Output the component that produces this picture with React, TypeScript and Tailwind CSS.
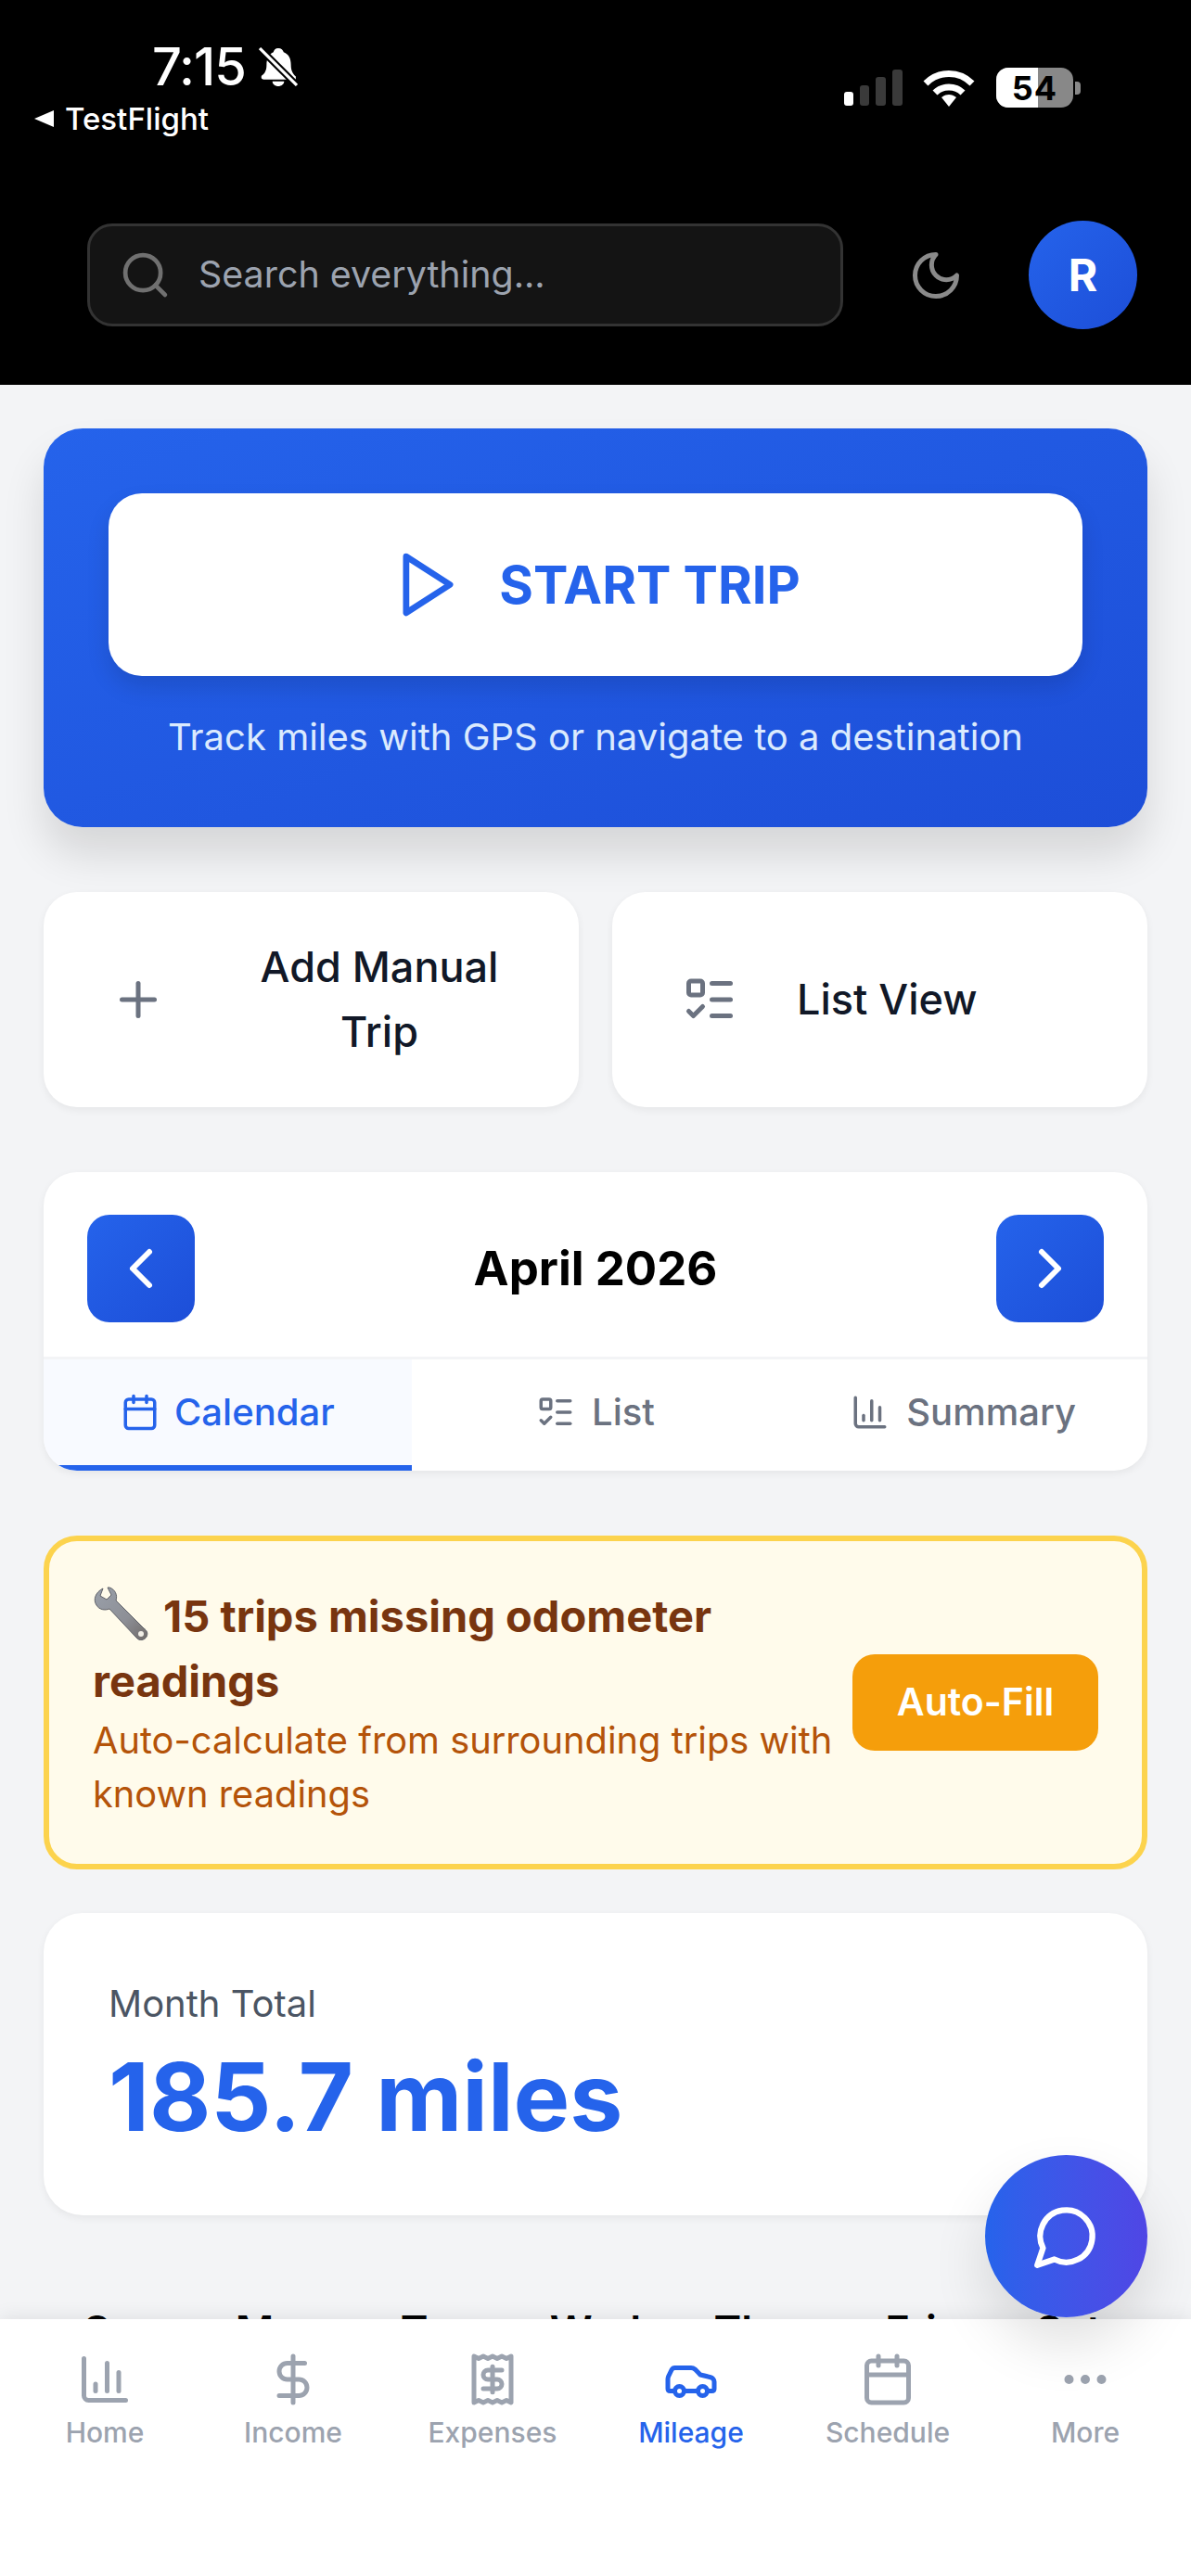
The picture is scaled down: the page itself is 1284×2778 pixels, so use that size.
import React from "react";
import { Search, Plus, ListTodo, ChevronLeft, ChevronRight, Calendar, ChartColumn, DollarSign, Receipt, Car, Ellipsis } from "lucide-react";

function Wrench() {
  return (
    <svg viewBox="0 0 60 60" className="inline-block w-[60px] h-[60px] mr-[16px] align-[-11px]">
      <defs>
        <linearGradient id="wr" x1="0" y1="0" x2="1" y2="1">
          <stop offset="0" stopColor="#9aa0aa" />
          <stop offset="0.6" stopColor="#8d8f96" />
          <stop offset="1" stopColor="#6f6a68" />
        </linearGradient>
      </defs>
      <path d="M11 2 C3 6 0 14 4 20 C7 25 13 26 18 24 L47 55 C50 59 56 58 58 54 C60 50 58 47 55 45 L25 15 C27 9 24 3 18 1 L16 1 L20 9 L15 14 L8 10 Z" fill="url(#wr)" stroke="#5f6168" strokeWidth="1" />
      <circle cx="52" cy="51" r="3" fill="#f1eee6" />
    </svg>
  );
}

const navItems = [
  { label: "Home", Icon: ChartColumn, w: "w-[202px]" },
  { label: "Income", Icon: DollarSign, w: "w-[204px]" },
  { label: "Expenses", Icon: Receipt, w: "w-[226px]" },
  { label: "Mileage", Icon: Car, w: "w-[202px]", active: true },
  { label: "Schedule", Icon: Calendar, w: "w-[222px]" },
  { label: "More", Icon: Ellipsis, w: "w-[204px]" },
];

export default function App() {
  return (
    <div className="relative w-[1284px] h-[2778px] overflow-hidden flex flex-col bg-[#f3f4f6] text-[#111827] font-['Inter','Liberation_Sans',sans-serif]">
      <header className="bg-black h-[415px] shrink-0 flex flex-col">
        <div className="flex justify-between items-start h-[238px] pt-[46px]">
          <div className="pl-[37px] flex flex-col">
            <div className="flex items-center pl-[127px] h-[52px] text-white">
              <span className="text-[56px] leading-[52px] font-medium tracking-[-1px]">7:15</span>
              <svg viewBox="0 0 40 40" className="w-[42px] h-[42px] ml-[14px]" fill="white">
                <path d="M20 1 C23 1 25 3 25.5 5 C31 7 33 12 33 18 C33 24 35 27 38 30 L38 33 L5 33 C3 33 2 31 3 29 C6 27 8 24 8 18 C8 12 10 7 15 5 C15.5 3 17 1 20 1 Z M14 35 L26 35 C26 38 23 40 20 40 C17 40 14 38 14 35 Z" />
                <path d="M1 1 L39 39" stroke="black" strokeWidth="7" />
                <path d="M1 1 L39 39" stroke="white" strokeWidth="3" />
              </svg>
            </div>
            <div className="flex items-center mt-[15px] h-[30px] text-white">
              <svg viewBox="0 0 21 18" className="w-[21px] h-[18px] mr-[12px]" fill="white"><path d="M21 0 V18 L0 9 Z" /></svg>
              <span className="text-[33px] leading-[30px] font-medium">TestFlight</span>
            </div>
          </div>
          <div className="flex items-center pr-[119px] pt-[27px] h-[70px]">
            <div className="flex items-end gap-[7px] h-[39px]">
              <div className="w-[10px] h-[15px] rounded-[3px] bg-white" />
              <div className="w-[10px] h-[22px] rounded-[3px] bg-[#3a3a3a]" />
              <div className="w-[11px] h-[31px] rounded-[3px] bg-[#3a3a3a]" />
              <div className="w-[11px] h-[39px] rounded-[3px] bg-[#3a3a3a]" />
            </div>
            <svg viewBox="0 0 56 40" className="w-[56px] h-[40px] ml-[22px]" fill="none" stroke="white" strokeWidth="7">
              <path d="M3 15 C17 1 39 1 53 15" />
              <path d="M13 25 C21 17 35 17 43 25" />
              <path d="M20 30 L28 40 L36 30 C31 26 25 26 20 30 Z" fill="white" stroke="none" />
            </svg>
            <div className="relative ml-[23px] w-[83px] h-[43px] rounded-[13px] overflow-hidden flex bg-[#888]">
              <div className="w-[45px] bg-white" />
              <span className="absolute inset-0 flex items-center justify-center text-black text-[36px] leading-none font-bold tracking-[1px]">54</span>
            </div>
            <div className="ml-[2px] w-[6px] h-[14px] rounded-r-[4px] bg-[#888]" />
          </div>
        </div>
        <div className="flex items-center pl-[94px] pr-[58px]">
          <div className="w-[816px] h-[111px] rounded-[27px] bg-[#141414] border-[3px] border-[#333] flex items-center pl-[31px]">
            <Search size={57} color="#707070" strokeWidth={2} />
            <span className="ml-[29px] text-[39.4px] text-[#9ca3af]">Search everything...</span>
          </div>
          <div className="w-[200px] flex justify-center">
            <svg viewBox="0 0 24 24" className="w-[60px] h-[60px]" fill="none" stroke="#8a8a8a" strokeWidth="2" strokeLinecap="round" strokeLinejoin="round"><path d="M12 3a6 6 0 0 0 9 9 9 9 0 1 1-9-9Z" /></svg>
          </div>
          <div className="w-[117px] h-[117px] rounded-full bg-gradient-to-br from-[#2563eb] to-[#1d4ed8] flex items-center justify-center text-white text-[48px] font-bold">R</div>
        </div>
      </header>

      <main className="flex-1 min-h-0 overflow-hidden px-[47px] pt-[47px] flex flex-col">
        <section className="h-[430px] shrink-0 rounded-[42px] bg-gradient-to-br from-[#2563eb] to-[#1d4ed8] shadow-[0_30px_45px_rgba(0,0,0,0.12)] px-[70px] pt-[70px]">
          <div className="h-[197px] rounded-[36px] bg-white flex items-center justify-center shadow-[0_12px_24px_rgba(0,0,0,0.12)]">
            <svg viewBox="0 0 24 24" className="w-[81px] h-[81px]" fill="none" stroke="#2563eb" strokeWidth="2" strokeLinecap="round" strokeLinejoin="round"><polygon points="5 3 19 12 5 21 5 3" /></svg>
            <span className="ml-[36px] text-[56px] font-bold text-[#2563eb]">START TRIP</span>
          </div>
          <p className="mt-[36px] text-center text-[40px] leading-[60px] text-[#dbeafe]">Track miles with GPS or navigate to a destination</p>
        </section>

        <section className="mt-[70px] grid grid-cols-2 gap-[36px] shrink-0">
          <div className="h-[232px] rounded-[36px] bg-white shadow-[0_3px_9px_rgba(0,0,0,0.06)] flex items-center pl-[72px] pr-[72px]">
            <Plus size={60} color="#6b7280" className="shrink-0" />
            <span className="flex-1 ml-[87px] text-center text-[45px] leading-[70px] font-medium">Add Manual Trip</span>
          </div>
          <div className="h-[232px] rounded-[36px] bg-white shadow-[0_3px_9px_rgba(0,0,0,0.06)] flex items-center pl-[75px]">
            <ListTodo size={60} color="#6b7280" className="shrink-0" />
            <span className="ml-[64px] text-[45px] font-medium">List View</span>
          </div>
        </section>

        <section className="mt-[70px] h-[322px] shrink-0 rounded-[36px] bg-white shadow-[0_3px_9px_rgba(0,0,0,0.06)] overflow-hidden flex flex-col">
          <div className="shrink-0 border-b-[3px] border-[#f3f4f6] px-[47px] pt-[46px] pb-[37px] flex items-center justify-between">
            <button className="w-[116px] h-[116px] rounded-[24px] bg-gradient-to-br from-[#2563eb] to-[#1d4ed8] flex items-center justify-center text-white"><ChevronLeft size={72} /></button>
            <span className="text-[51px] font-bold text-black">April 2026</span>
            <button className="w-[116px] h-[116px] rounded-[24px] bg-gradient-to-br from-[#2563eb] to-[#1d4ed8] flex items-center justify-center text-white"><ChevronRight size={72} /></button>
          </div>
          <div className="flex-1 grid grid-cols-3">
            <div className="bg-[#f8faff] border-b-[6px] border-[#2563eb] flex items-center justify-center gap-[16px] text-[#2563eb] text-[40px] font-medium">
              <Calendar size={42} /><span>Calendar</span>
            </div>
            <div className="flex items-center justify-center gap-[18px] text-[#6b7280] text-[40px] font-medium pb-[6px]">
              <ListTodo size={42} /><span>List</span>
            </div>
            <div className="flex items-center justify-center gap-[18px] text-[#6b7280] text-[40px] font-medium pb-[6px]">
              <ChartColumn size={42} /><span>Summary</span>
            </div>
          </div>
        </section>

        <section className="mt-[70px] h-[360px] shrink-0 rounded-[36px] bg-[#fffbeb] border-[6px] border-[#fcd34d] flex items-center pl-[47px] pr-[47px]">
          <div className="flex-1 min-w-0">
            <p className="text-[47px] leading-[70px] font-bold text-[#78350f]"><Wrench />15 trips missing odometer readings</p>
            <p className="text-[39.8px] leading-[58px] text-[#b45309]">Auto-calculate from surrounding trips with known readings</p>
          </div>
          <button className="ml-[14px] w-[265px] h-[104px] shrink-0 rounded-[24px] bg-[#f59e0b] text-white text-[41px] font-semibold flex items-center justify-center">Auto-Fill</button>
        </section>

        <section className="mt-[47px] h-[326px] shrink-0 rounded-[42px] bg-white shadow-[0_3px_9px_rgba(0,0,0,0.06)] px-[70px] pt-[74px]">
          <p className="text-[40px] leading-[48px] text-[#4b5563]">Month Total</p>
          <p className="mt-[21px] text-[102px] leading-[110px] font-bold text-[#2563eb]">185.7 miles</p>
        </section>

        <section className="mt-[91px] grid grid-cols-7 text-center text-[45px] font-semibold text-black shrink-0">
          {["Sun", "Mon", "Tue", "Wed", "Thu", "Fri", "Sat"].map((d) => <span key={d}>{d}</span>)}
        </section>
      </main>

      <nav className="relative z-10 h-[277px] shrink-0 bg-white shadow-[0_-3px_18px_rgba(0,0,0,0.08)] flex items-start px-[12px] pt-[35px]">
        {navItems.map(({ label, Icon, w, active }) => (
          <div key={label} className={`${w} flex flex-col items-center ${active ? "text-[#2563eb]" : "text-[#9ca3af]"}`}>
            <Icon size={60} />
            <span className="mt-[9px] text-[30px] leading-[36px] font-medium">{label}</span>
          </div>
        ))}
      </nav>

      <button className="absolute z-20 left-[1062px] top-[2324px] w-[175px] h-[175px] rounded-full bg-gradient-to-r from-[#2563eb] to-[#4f46e5] flex items-center justify-center shadow-[0_30px_60px_rgba(0,0,0,0.12)]">
        <svg viewBox="0 0 24 24" className="w-[75px] h-[75px]" fill="none" stroke="white" strokeWidth="2" strokeLinecap="round" strokeLinejoin="round"><path d="M7.9 20A9 9 0 1 0 4 16.1L2 22Z" /></svg>
      </button>
    </div>
  );
}
